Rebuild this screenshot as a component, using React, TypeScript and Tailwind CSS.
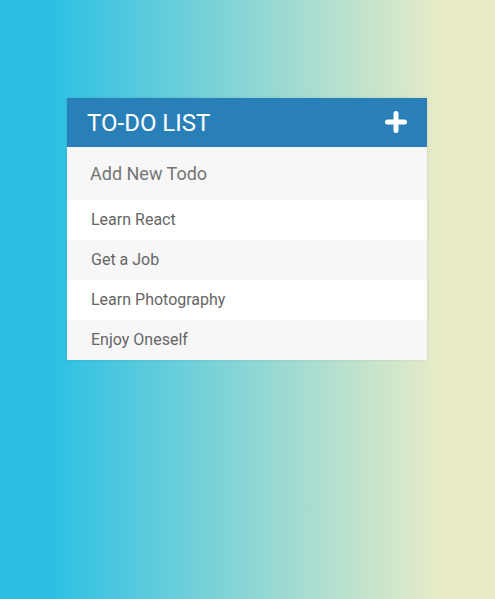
const todos = ["Learn React", "Get a Job", "Learn Photography", "Enjoy Oneself"];

export default function App() {
  return (
    <div className="min-h-[599px] w-full bg-[linear-gradient(90deg,#2BC0E4_10%,#EAECC6_90%)] pt-[98px] font-['Roboto',sans-serif]">
      <div className="ml-[67px] w-[360px] bg-[#f7f7f7] shadow-[0_0_3px_rgba(0,0,0,0.1)]">
        <h1 className="flex h-[49px] items-center justify-between bg-[#2980b9] pl-5 pr-5 text-2xl font-normal uppercase text-white">
          <span>To-Do List</span>
          <svg width="22" height="22" viewBox="0 0 22 22" className="mt-[-2px]">
            <path d="M11 2.5v17M2.5 11h17" stroke="white" strokeWidth="5" strokeLinecap="round" />
          </svg>
        </h1>
        <input
          type="text"
          placeholder="Add New Todo"
          className="block h-[52px] w-full bg-[#f7f7f7] pl-[23px] text-lg text-[#2980b9] outline-none placeholder:text-[#757575]"
        />
        <ul className="pt-px">
          {todos.map((todo, i) => (
            <li
              key={todo}
              className={`h-10 pl-6 leading-10 text-[#666] ${i % 2 === 1 ? "bg-[#f7f7f7]" : "bg-white"}`}
            >
              {todo}
            </li>
          ))}
        </ul>
      </div>
    </div>
  );
}
